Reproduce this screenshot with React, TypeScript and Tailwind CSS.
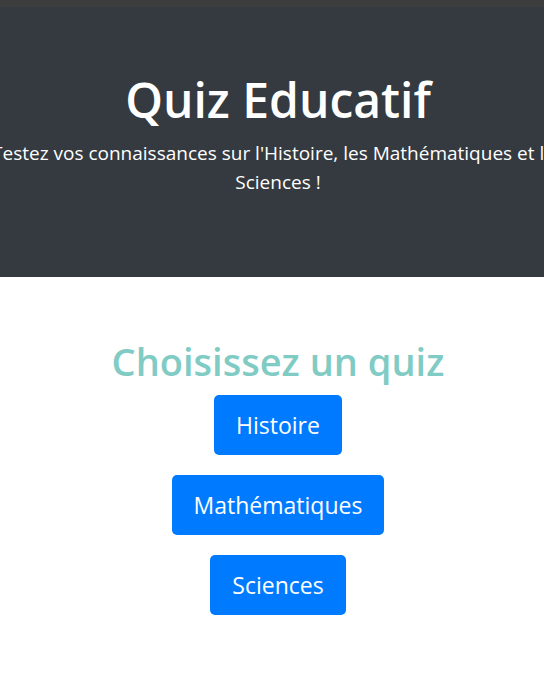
export default function App() {
  const quizzes = ["Histoire", "Mathématiques", "Sciences"];

  return (
    <div className="min-h-screen bg-white font-['Segoe_UI','Open_Sans',sans-serif]">
      {/* thin top strip */}
      <div className="h-[7px] bg-[#3d3d3d]" />

      {/* Header */}
      <header className="bg-[#343a40] text-white pt-[64px] pb-[80px] pl-[12px] overflow-hidden">
        <h1 className="text-center text-[48px] leading-[58px] font-semibold mb-[10px]">
          Quiz Educatif
        </h1>
        <div className="flex justify-center">
          <p className="w-[600px] shrink-0 text-center text-[19px] leading-[29px]">
            Testez vos connaissances sur l'Histoire, les Mathématiques et les Sciences !
          </p>
        </div>
      </header>

      {/* Quiz selection */}
      <main className="flex flex-col items-center pt-[60px] pl-[12px]">
        <h2 className="text-[38px] leading-[48px] font-semibold text-[#80cbc4] mb-[10px]">
          Choisissez un quiz
        </h2>
        <div className="flex flex-col items-center gap-[20px]">
          {quizzes.map((q) => (
            <button
              key={q}
              className="bg-[#007bff] text-white text-[23px] leading-[36px] py-[12px] px-[22px] rounded-[5px]"
            >
              {q}
            </button>
          ))}
        </div>
      </main>
    </div>
  );
}
